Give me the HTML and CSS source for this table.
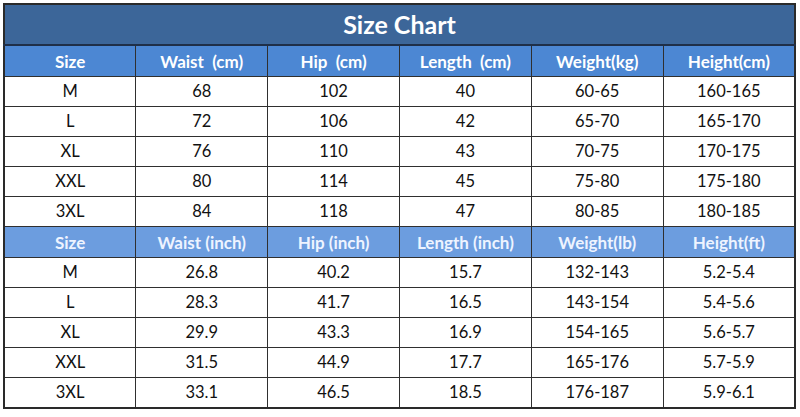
FILE: index.html
```html
<!DOCTYPE html>
<html>
<head>
<meta charset="utf-8">
<link rel="stylesheet" href="styles.css">
</head>
<body>
<table class="chart">
  <tr class="title"><td colspan="6">Size Chart</td></tr>
  <tr class="head">
    <td>Size</td><td>Waist &nbsp;(cm)</td><td>Hip &nbsp;(cm)</td><td>Length &nbsp;(cm)</td><td>Weight(kg)</td><td>Height(cm)</td>
  </tr>
  <tr><td>M</td><td>68</td><td>102</td><td>40</td><td>60-65</td><td>160-165</td></tr>
  <tr><td>L</td><td>72</td><td>106</td><td>42</td><td>65-70</td><td>165-170</td></tr>
  <tr><td>XL</td><td>76</td><td>110</td><td>43</td><td>70-75</td><td>170-175</td></tr>
  <tr><td>XXL</td><td>80</td><td>114</td><td>45</td><td>75-80</td><td>175-180</td></tr>
  <tr><td>3XL</td><td>84</td><td>118</td><td>47</td><td>80-85</td><td>180-185</td></tr>
  <tr class="head2">
    <td>Size</td><td>Waist (inch)</td><td>Hip (inch)</td><td>Length (inch)</td><td>Weight(lb)</td><td>Height(ft)</td>
  </tr>
  <tr><td>M</td><td>26.8</td><td>40.2</td><td>15.7</td><td>132-143</td><td>5.2-5.4</td></tr>
  <tr><td>L</td><td>28.3</td><td>41.7</td><td>16.5</td><td>143-154</td><td>5.4-5.6</td></tr>
  <tr><td>XL</td><td>29.9</td><td>43.3</td><td>16.9</td><td>154-165</td><td>5.6-5.7</td></tr>
  <tr><td>XXL</td><td>31.5</td><td>44.9</td><td>17.7</td><td>165-176</td><td>5.7-5.9</td></tr>
  <tr><td>3XL</td><td>33.1</td><td>46.5</td><td>18.5</td><td>176-187</td><td>5.9-6.1</td></tr>
</table>
</body>
</html>
```
FILE: styles.css
```css
html, body {
  margin: 0;
  padding: 0;
  background: #ffffff;
}
body {
  padding: 3px 0 0 3px;
  font-family: Lato, "Open Sans", sans-serif;
}
.chart {
  width: 793px;
  table-layout: fixed;
  border-collapse: collapse;
  border: 2px solid #2a2a2a;
}
.chart td {
  border: 1px solid #2f2f2f;
  text-align: center;
  vertical-align: middle;
  height: 29px;
  padding: 0;
  font-size: 16.5px;
  color: #111;
  line-height: 1;
}
.title td {
  height: 39px;
  background: #3c6699;
  color: #ffffff;
  font-weight: 700;
  font-size: 25px;
  border-bottom: 2px solid #1f2f48;
}
.head td {
  height: 30px;
  background: #4c87d3;
  color: #ffffff;
  font-weight: 700;
  font-size: 17px;
}
.head2 td {
  height: 30px;
  background: #6c9ddf;
  color: #eef4ff;
  font-weight: 700;
  font-size: 17px;
}
```
